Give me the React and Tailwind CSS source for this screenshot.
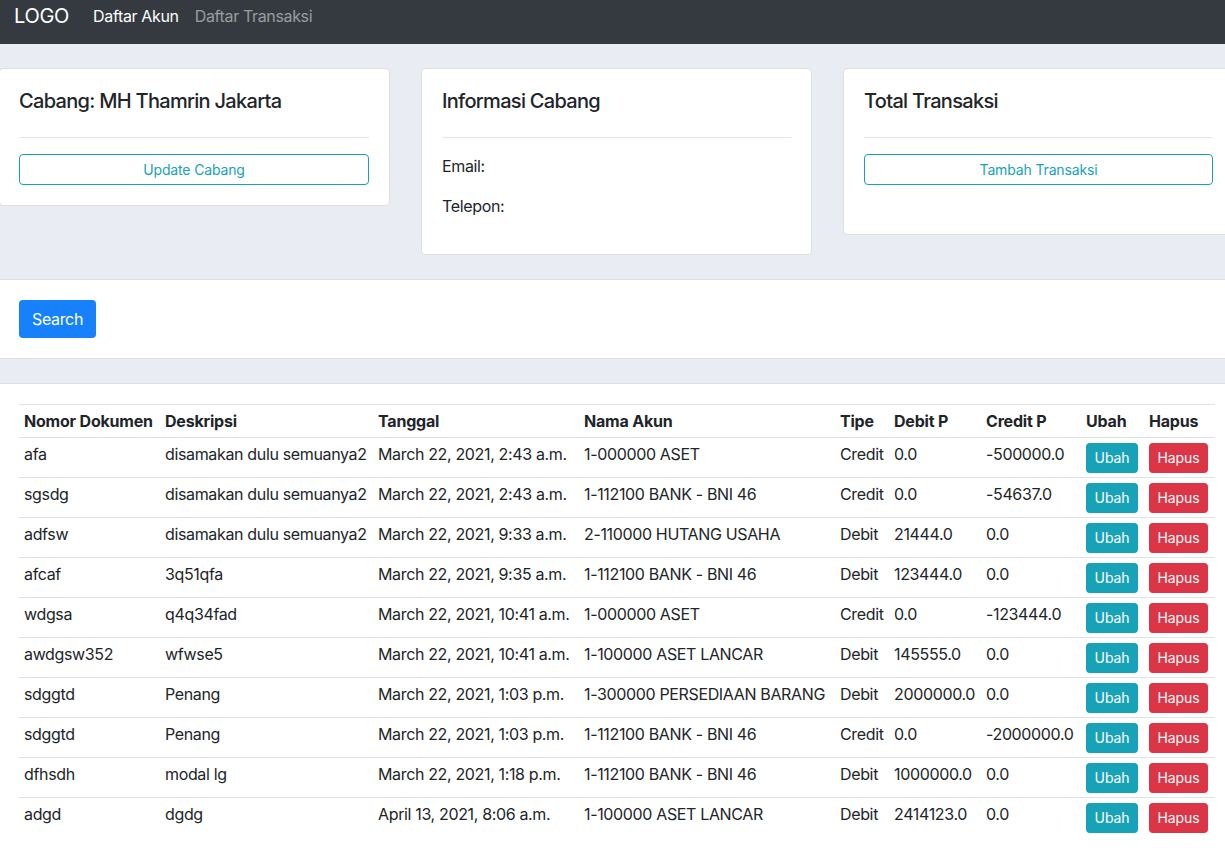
import React from "react";

const rows = [
  ["afa", "disamakan dulu semuanya2", "March 22, 2021, 2:43 a.m.", "1-000000 ASET", "Credit", "0.0", "-500000.0"],
  ["sgsdg", "disamakan dulu semuanya2", "March 22, 2021, 2:43 a.m.", "1-112100 BANK - BNI 46", "Credit", "0.0", "-54637.0"],
  ["adfsw", "disamakan dulu semuanya2", "March 22, 2021, 9:33 a.m.", "2-110000 HUTANG USAHA", "Debit", "21444.0", "0.0"],
  ["afcaf", "3q51qfa", "March 22, 2021, 9:35 a.m.", "1-112100 BANK - BNI 46", "Debit", "123444.0", "0.0"],
  ["wdgsa", "q4q34fad", "March 22, 2021, 10:41 a.m.", "1-000000 ASET", "Credit", "0.0", "-123444.0"],
  ["awdgsw352", "wfwse5", "March 22, 2021, 10:41 a.m.", "1-100000 ASET LANCAR", "Debit", "145555.0", "0.0"],
  ["sdggtd", "Penang", "March 22, 2021, 1:03 p.m.", "1-300000 PERSEDIAAN BARANG", "Debit", "2000000.0", "0.0"],
  ["sdggtd", "Penang", "March 22, 2021, 1:03 p.m.", "1-112100 BANK - BNI 46", "Credit", "0.0", "-2000000.0"],
  ["dfhsdh", "modal lg", "March 22, 2021, 1:18 p.m.", "1-112100 BANK - BNI 46", "Debit", "1000000.0", "0.0"],
  ["adgd", "dgdg", "April 13, 2021, 8:06 a.m.", "1-100000 ASET LANCAR", "Debit", "2414123.0", "0.0"],
];

const headers = ["Nomor Dokumen", "Deskripsi", "Tanggal", "Nama Akun", "Tipe", "Debit P", "Credit P", "Ubah", "Hapus"];
const widths = ["w-[141px]", "w-[213px]", "w-[206px]", "w-[256px]", "w-[54px]", "w-[92px]", "w-[100px]", "w-[63px]", "w-[71px]"];

function Card({ title, children, className = "" }) {
  return (
    <div className={`w-[391px] shrink-0 bg-white border border-[#dfdfdf] rounded-[4px] p-5 ${className}`}>
      <h5 className="text-[20px] leading-[24px] font-medium tracking-[-0.7px] text-[#212529]">{title}</h5>
      <hr className="mt-[24px] mb-4 border-t border-[#e5e5e5]" />
      {children}
    </div>
  );
}

export default function App() {
  return (
    <div
      className="min-h-[852px] bg-[#eaecf4] text-[#212529] overflow-hidden tracking-[-0.35px]"
      style={{ fontFamily: "Inter, 'Noto Sans', sans-serif" }}
    >
      {/* navbar */}
      <nav className="h-[44px] bg-[#343a40] flex items-start pl-[14px]">
        <div className="flex items-center h-[32px]">
          <span className="text-[20px] text-white mr-[16px] tracking-[-0.3px]">LOGO</span>
          <a className="px-2 text-[16px] text-white">Daftar Akun</a>
          <a className="px-2 text-[16px] text-white/50">Daftar Transaksi</a>
        </div>
      </nav>

      {/* cards */}
      <div className="flex items-start gap-[31px] pt-[24px] pb-[24px] -ml-[1px]">
        <Card title="Cabang: MH Thamrin Jakarta" className="pl-[19px]">
          <button className="w-full h-[31px] border border-[#17a2b8] text-[#17a2b8] rounded-[4px] text-[14px] tracking-[-0.15px]">
            Update Cabang
          </button>
        </Card>
        <Card title="Informasi Cabang">
          <p className="leading-6 mb-4">Email:</p>
          <p className="leading-6 mb-4">Telepon:</p>
        </Card>
        <Card title="Total Transaksi">
          <button className="w-full h-[31px] border border-[#17a2b8] text-[#17a2b8] rounded-[4px] text-[14px] tracking-[-0.15px]">
            Tambah Transaksi
          </button>
          <div className="h-[29px]" />
        </Card>
      </div>

      {/* search band */}
      <div className="bg-white border-y border-[#dfdfdf] py-5 pl-[19px]">
        <button className="h-[38px] w-[77px] bg-[#1681fb] text-white rounded-[4px] text-[16px]">Search</button>
      </div>

      {/* table */}
      <div className="mt-[24px] bg-white border-t border-[#dfdfdf] px-[19px] pt-[20px] pb-[40px]">
        <table className="table-fixed border-collapse w-[1196px] text-[16px] leading-6">
          <thead>
            <tr className="border-t border-b border-[#dee2e6]">
              {headers.map((h, i) => (
                <th key={h} className={`${widths[i]} text-left font-bold tracking-[-0.2px] px-[5px] py-[4px] whitespace-nowrap`}>
                  {h}
                </th>
              ))}
            </tr>
          </thead>
          <tbody>
            {rows.map((r, idx) => (
              <tr key={idx} className={idx < rows.length - 1 ? "border-b border-[#dee2e6]" : ""}>
                {r.map((c, j) => (
                  <td key={j} className="align-top px-[5px] pt-[4px] whitespace-nowrap">
                    {c}
                  </td>
                ))}
                <td className="align-top px-[5px] pt-[5px] pb-[4px]">
                  <button className="h-[30px] w-[52px] bg-[#17a2b8] text-white rounded-[4px] text-[14px] tracking-[-0.1px]">Ubah</button>
                </td>
                <td className="align-top px-[5px] pt-[5px] pb-[4px]">
                  <button className="h-[30px] w-[59px] bg-[#dc3545] text-white rounded-[4px] text-[14px] tracking-[-0.1px]">Hapus</button>
                </td>
              </tr>
            ))}
          </tbody>
        </table>
      </div>
    </div>
  );
}
